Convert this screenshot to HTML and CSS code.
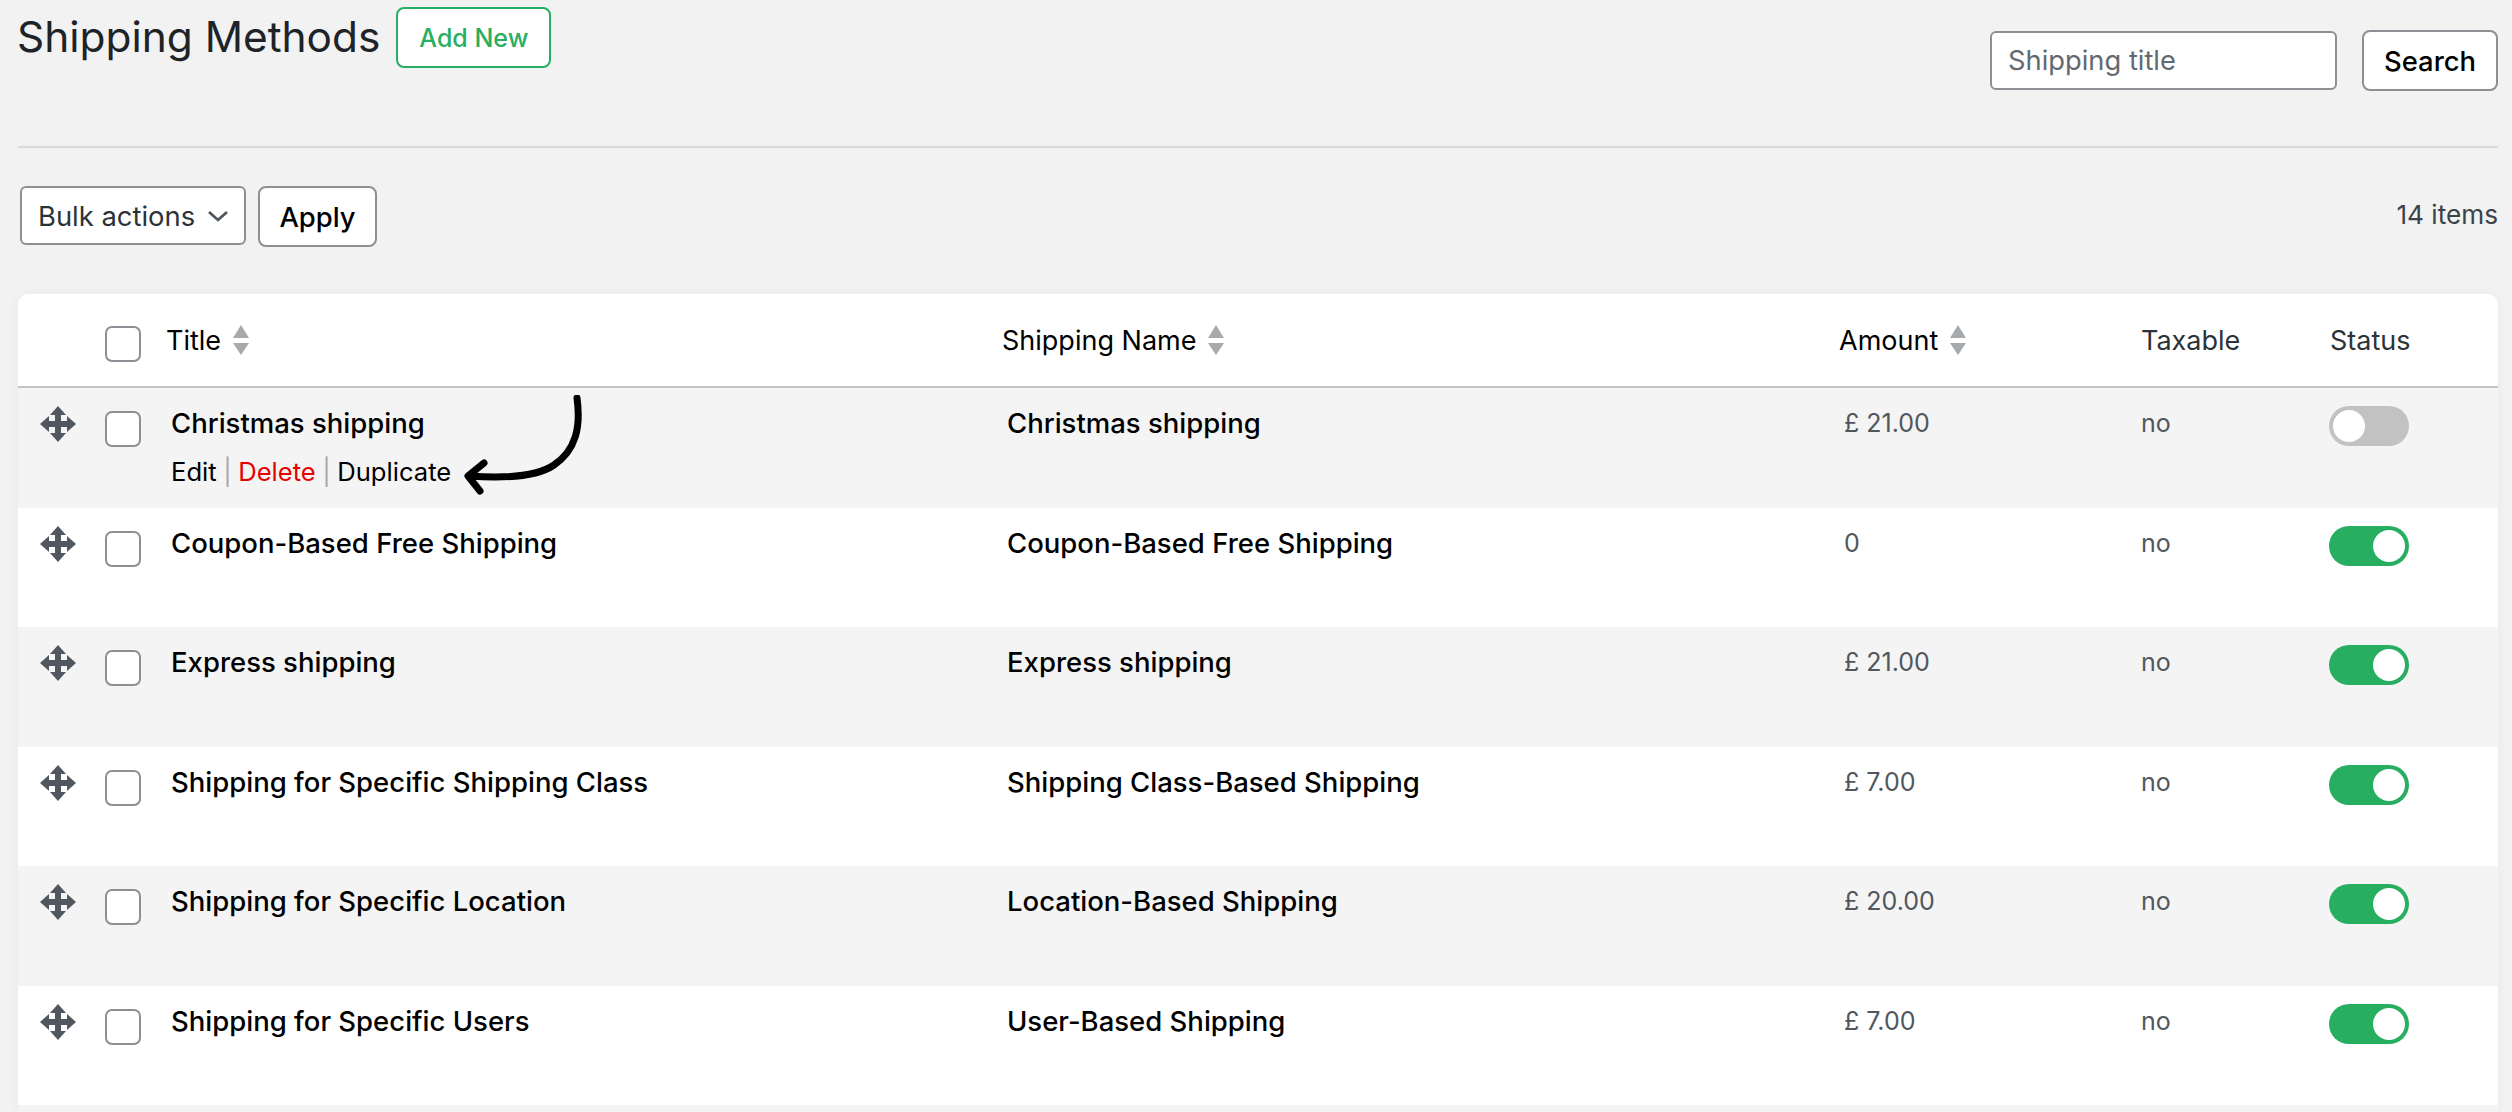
FILE: index.html
```html
<!DOCTYPE html>
<html lang="en">

<head>
    <meta charset="UTF-8">
    <meta name="viewport" content="width=device-width, initial-scale=1.0">
    <title>Shipping Methods</title>
    <link rel="stylesheet" href="styles.css">
</head>

<body>
    <div class="wrap">
        <div class="page-head">
            <div class="page-title">
                <h1>Shipping Methods</h1>
                <a class="add-new" href="#">Add New</a>
            </div>
            <form class="search-box">
                <input type="text" class="search-input" placeholder="Shipping title">
                <button type="button" class="btn">Search</button>
            </form>
        </div>

        <div class="toolbar">
            <div class="bulk">
                <div class="bulk-select">
                    <span>Bulk actions</span>
                    <svg class="chevron" width="22" height="12" viewBox="0 0 22 12">
                        <path d="M2 2l9 8 9-8" fill="none" stroke="#50575e" stroke-width="2.8" />
                    </svg>
                </div>
                <button type="button" class="btn btn-apply">Apply</button>
            </div>
            <span class="count">14 items</span>
        </div>

        <div class="card">
            <table class="methods">
                <colgroup>
                    <col class="col-drag">
                    <col class="col-check">
                    <col class="col-title">
                    <col class="col-name">
                    <col class="col-amount">
                    <col class="col-tax">
                    <col class="col-status">
                </colgroup>
                <thead>
                    <tr>
                        <th></th>
                        <th><span class="check"></span></th>
                        <th class="sortable"><a href="#">Title
                                <svg class="sort" width="16" height="30" viewBox="0 0 16 30"><path d="M8 0l8 13H0zM0 18h16l-8 12z" /></svg></a></th>
                        <th class="sortable"><a href="#">Shipping Name
                                <svg class="sort" width="16" height="30" viewBox="0 0 16 30"><path d="M8 0l8 13H0zM0 18h16l-8 12z" /></svg></a></th>
                        <th class="sortable"><a href="#">Amount
                                <svg class="sort" width="16" height="30" viewBox="0 0 16 30"><path d="M8 0l8 13H0zM0 18h16l-8 12z" /></svg></a></th>
                        <th>Taxable</th>
                        <th>Status</th>
                    </tr>
                </thead>
                <tbody>
                    <tr>
                        <td><svg class="move" width="36" height="36" viewBox="0 0 36 36"><use href="#move-icon" /></svg></td>
                        <td><span class="check"></span></td>
                        <td class="name">
                            Christmas shipping
                            <div class="row-actions">
                                <a href="#">Edit</a><i>|</i><a href="#" class="danger">Delete</a><i>|</i><a href="#">Duplicate</a>
                            </div>
                        </td>
                        <td class="name">Christmas shipping</td>
                        <td>£ 21.00</td>
                        <td>no</td>
                        <td><span class="toggle"></span></td>
                    </tr>
                    <tr>
                        <td><svg class="move" width="36" height="36" viewBox="0 0 36 36"><use href="#move-icon" /></svg></td>
                        <td><span class="check"></span></td>
                        <td class="name">Coupon-Based Free Shipping</td>
                        <td class="name">Coupon-Based Free Shipping</td>
                        <td>0</td>
                        <td>no</td>
                        <td><span class="toggle on"></span></td>
                    </tr>
                    <tr>
                        <td><svg class="move" width="36" height="36" viewBox="0 0 36 36"><use href="#move-icon" /></svg></td>
                        <td><span class="check"></span></td>
                        <td class="name">Express shipping</td>
                        <td class="name">Express shipping</td>
                        <td>£ 21.00</td>
                        <td>no</td>
                        <td><span class="toggle on"></span></td>
                    </tr>
                    <tr>
                        <td><svg class="move" width="36" height="36" viewBox="0 0 36 36"><use href="#move-icon" /></svg></td>
                        <td><span class="check"></span></td>
                        <td class="name">Shipping for Specific Shipping Class</td>
                        <td class="name">Shipping Class-Based Shipping</td>
                        <td>£ 7.00</td>
                        <td>no</td>
                        <td><span class="toggle on"></span></td>
                    </tr>
                    <tr>
                        <td><svg class="move" width="36" height="36" viewBox="0 0 36 36"><use href="#move-icon" /></svg></td>
                        <td><span class="check"></span></td>
                        <td class="name">Shipping for Specific Location</td>
                        <td class="name">Location-Based Shipping</td>
                        <td>£ 20.00</td>
                        <td>no</td>
                        <td><span class="toggle on"></span></td>
                    </tr>
                    <tr>
                        <td><svg class="move" width="36" height="36" viewBox="0 0 36 36"><use href="#move-icon" /></svg></td>
                        <td><span class="check"></span></td>
                        <td class="name">Shipping for Specific Users</td>
                        <td class="name">User-Based Shipping</td>
                        <td>£ 7.00</td>
                        <td>no</td>
                        <td><span class="toggle on"></span></td>
                    </tr>
                </tbody>
            </table>
            <div class="next-row"></div>

            <!-- annotation pointing at Duplicate -->
            <svg class="arrow" width="125" height="100" viewBox="0 0 125 100">
                <path d="M117 3C121 32 116 55 94 70C78 81 50 84 9 81M24 68L8 81L20 96" fill="none" stroke="#000" stroke-width="7" stroke-linecap="round" stroke-linejoin="round" />
            </svg>
        </div>
    </div>

    <svg class="icon-defs" width="0" height="0">
        <symbol id="move-icon" viewBox="0 0 36 36">
            <path d="M18 0l8 9h-5v6h6v-5l9 8-9 8v-5h-6v6h5l-8 9-8-9h5v-6H9v5l-9-8 9-8v5h6V9h-5z" fill="#50575e" />
        </symbol>
    </svg>
</body>

</html>
```

FILE: styles.css
```css
* {
    box-sizing: border-box;
}

html,
body {
    margin: 0;
    height: 100%;
}

body {
    font-family: Inter, "Liberation Sans", sans-serif;
    background-color: #f2f2f2;
    color: #50575e;
    overflow: hidden;
}

a {
    color: inherit;
    text-decoration: none;
}

.wrap {
    padding: 0 14px 0 18px;
}

.page-head {
    display: flex;
    justify-content: space-between;
    align-items: flex-start;
    height: 148px;
    border-bottom: 2px solid #dadada;
}

.page-title {
    display: flex;
    align-items: flex-start;
}

h1 {
    margin: 12px 0 0 -1px;
    font-size: 42.4px;
    line-height: 50px;
    font-weight: 400;
    color: #1d2327;
}

.add-new {
    margin: 7px 0 0 16px;
    height: 61px;
    width: 155px;
    display: flex;
    align-items: center;
    justify-content: center;
    background: #fff;
    border: 2px solid #27ae60;
    border-radius: 8px;
    color: #27ae60;
    font-size: 25px;
    font-weight: 500;
}

.search-box {
    display: flex;
    align-items: center;
    gap: 25px;
    margin-top: 30px;
}

.search-input {
    width: 347px;
    height: 59px;
    padding: 0 16px;
    background: #fff;
    border: 2px solid #8c8f94;
    border-radius: 6px;
    font-family: inherit;
    font-size: 27.3px;
    color: #2c3338;
}

.search-input::placeholder {
    color: #646970;
}

.btn {
    height: 61px;
    padding: 0 20px;
    background: #fff;
    border: 2px solid #8c8f94;
    border-radius: 8px;
    font-family: inherit;
    font-size: 27.4px;
    font-weight: 500;
    color: #000;
}

.toolbar {
    display: flex;
    justify-content: space-between;
    align-items: flex-start;
    margin-top: 38px;
}

.bulk {
    display: flex;
    align-items: flex-start;
    gap: 12px;
    margin-left: 2px;
}

.bulk-select {
    width: 226px;
    height: 59px;
    padding: 0 15px 0 16px;
    display: flex;
    align-items: center;
    justify-content: space-between;
    background: #fff;
    border: 2px solid #8c8f94;
    border-radius: 6px;
    font-size: 27.4px;
    color: #2c3338;
}

.btn-apply {
    width: 119px;
    padding: 0;
}

.count {
    margin-top: 14px;
    font-size: 26.2px;
    line-height: 30px;
    color: #3c434a;
}

.card {
    position: relative;
    margin-top: 47px;
    background: #fff;
    border-radius: 10px 10px 0 0;
    box-shadow: 0 0 12px rgba(0, 0, 0, 0.04);
}

.methods {
    width: 100%;
    table-layout: fixed;
    border-collapse: separate;
    border-spacing: 0;
}

.col-drag {
    width: 77px;
}

.col-check {
    width: 65px;
}

.col-title {
    width: 836px;
}

.col-name {
    width: 837px;
}

.col-amount {
    width: 297px;
}

.col-tax {
    width: 189px;
}

.col-status {
    width: 179px;
}

th {
    height: 94px;
    padding: 0 0 0 11px;
    text-align: left;
    font-size: 27px;
    font-weight: 400;
    color: #2c3338;
    border-bottom: 2px solid #c3c4c7;
    vertical-align: middle;
}

th .check {
    margin: 8px 0 0 -1px;
}

.sortable a {
    display: inline-flex;
    align-items: center;
    gap: 12px;
    margin: -8px 0 0 -5px;
    color: #000;
}

.sort {
    fill: #a7aaad;
}

td {
    height: 119.5px;
    padding: 18px 0 0 11px;
    vertical-align: top;
    font-size: 25px;
    line-height: 34px;
}

tbody tr:nth-child(odd) {
    background: #f4f4f4;
}

td:first-child {
    padding: 18px 0 0 22px;
}

td.name {
    font-size: 27.5px;
    font-weight: 500;
    color: #000;
}

.move {
    display: block;
}

.check {
    display: block;
    width: 36px;
    height: 36px;
    margin: 5px 0 0 -1px;
    background: #fff;
    border: 2px solid #8c8f94;
    border-radius: 7px;
}

.row-actions {
    margin-top: 15px;
    font-size: 25.6px;
    font-weight: 400;
    line-height: 34px;
}

.row-actions i {
    font-style: normal;
    color: #a7aaad;
    margin: 0 6.5px;
}

.danger {
    color: #e60000;
}

.toggle {
    display: block;
    position: relative;
    width: 80px;
    height: 40px;
    margin: 0 0 0 -1px;
    border-radius: 20px;
    background: #c2c2c2;
}

.toggle::after {
    content: "";
    position: absolute;
    top: 4px;
    left: 4px;
    width: 32px;
    height: 32px;
    border-radius: 50%;
    background: #fff;
}

.toggle.on {
    background: #27ae60;
}

.toggle.on::after {
    left: 44px;
}

.next-row {
    height: 7px;
    background: #f4f4f4;
}

.arrow {
    position: absolute;
    left: 442px;
    top: 101px;
}

.icon-defs {
    position: absolute;
}
```
